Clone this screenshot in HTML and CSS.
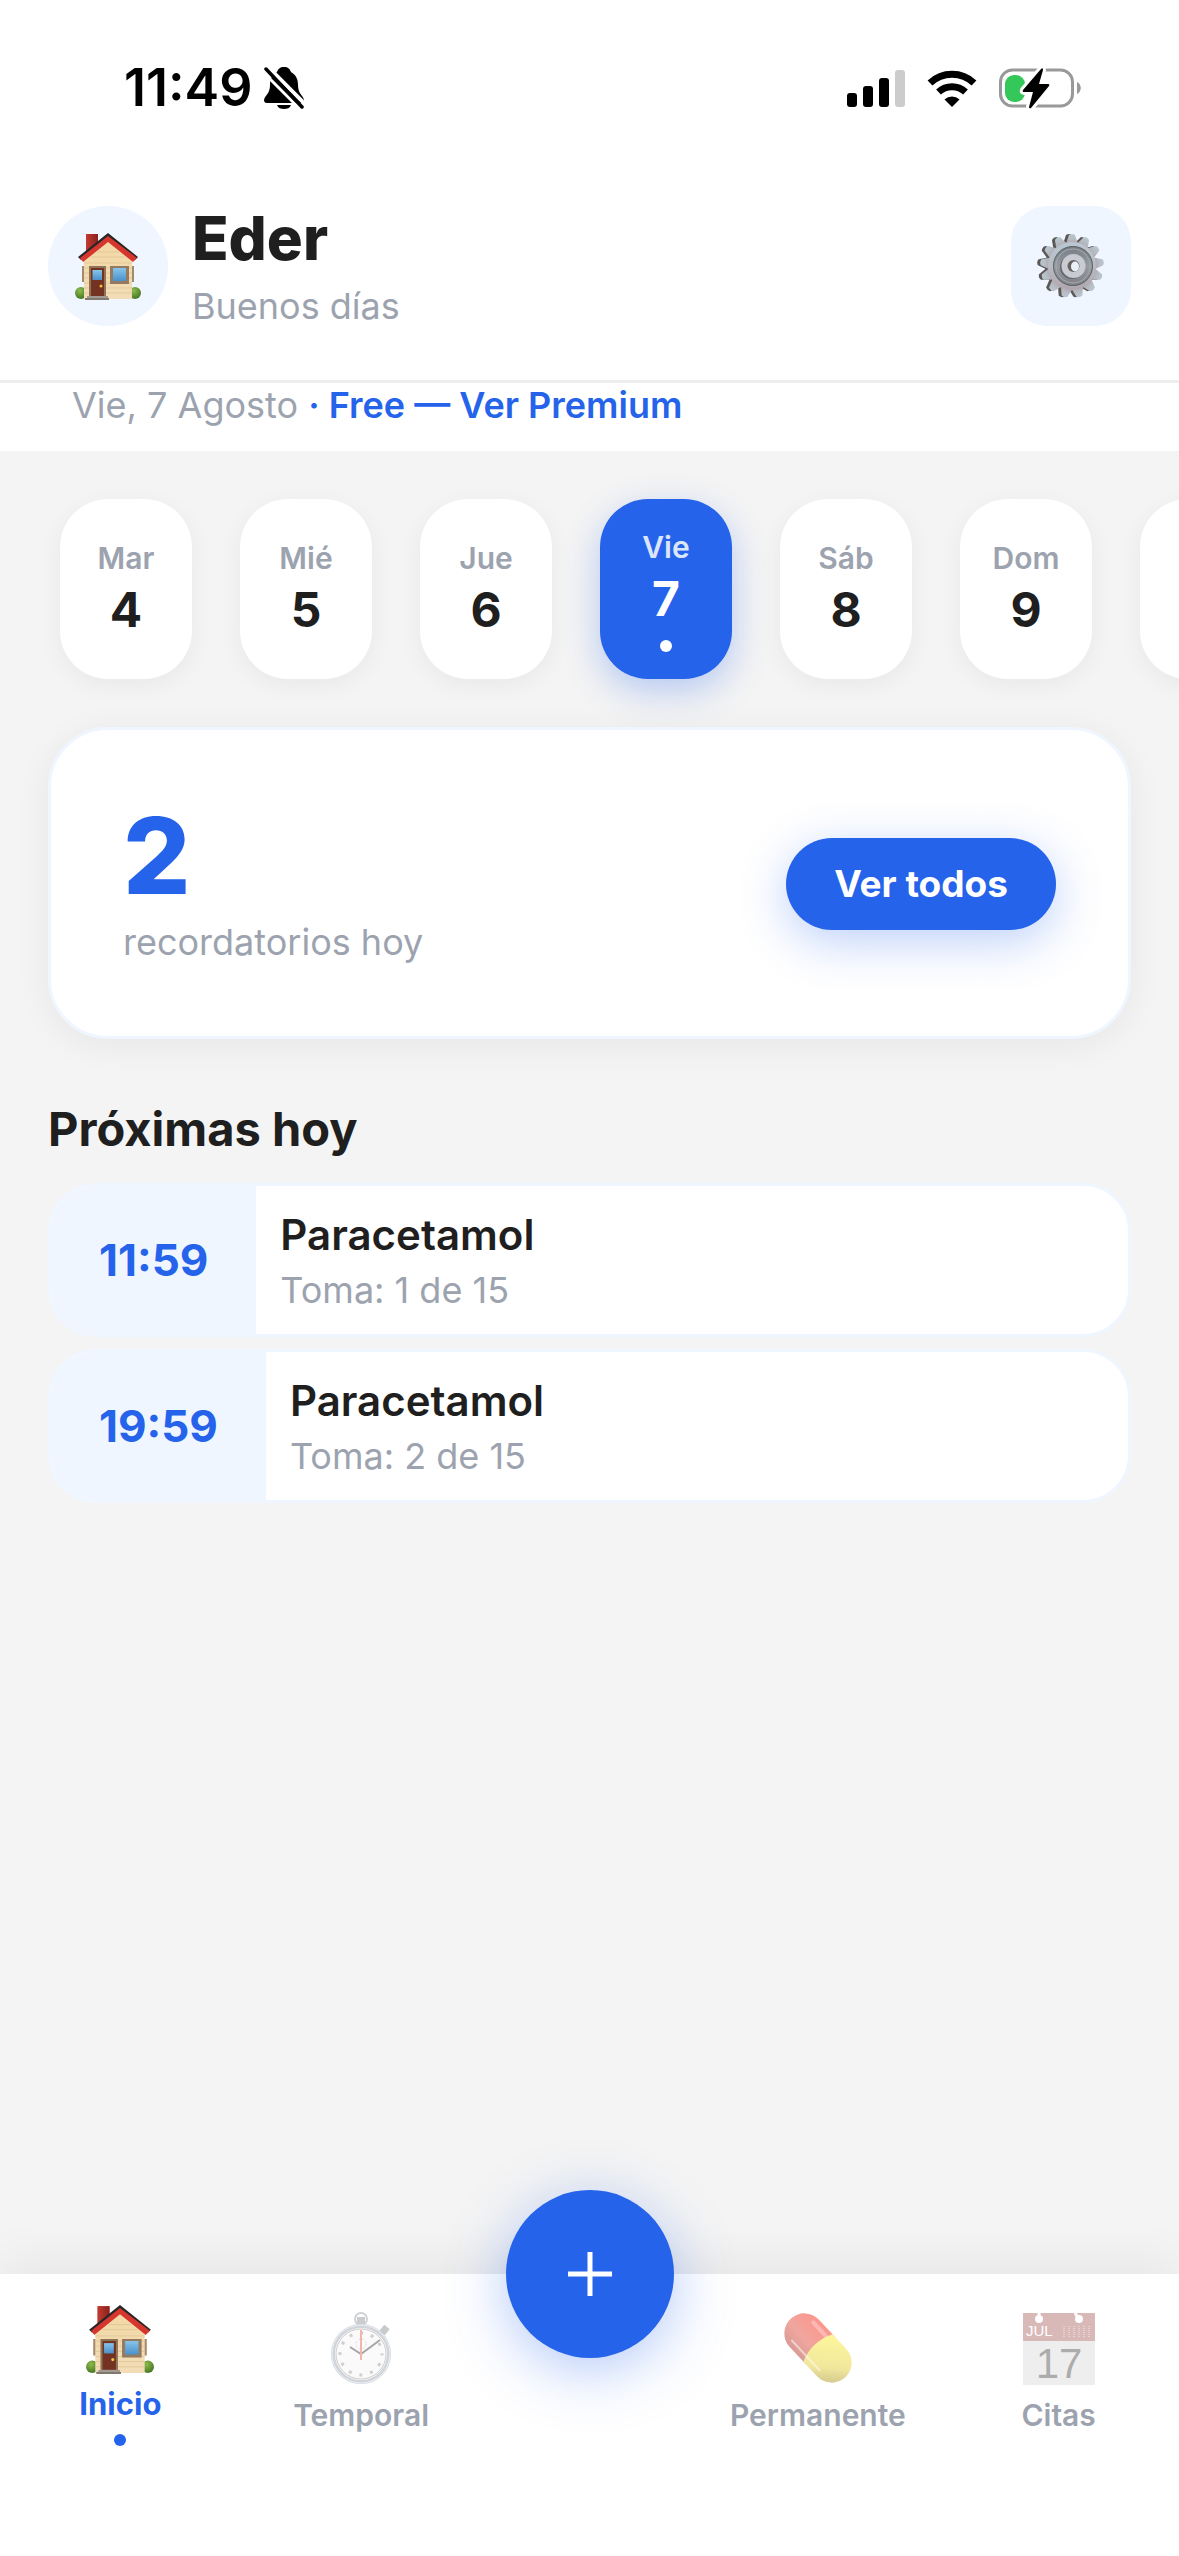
FILE: index.html
```html
<!DOCTYPE html>
<html lang="es">
<head>
    <meta charset="UTF-8">
    <meta name="viewport" content="width=device-width, initial-scale=1.0">
    <title>Recordatorios</title>
    <link rel="stylesheet" href="styles.css">
</head>
<body>
    <!-- Shared drawings -->
    <svg class="defs" aria-hidden="true">
        <defs>
            <linearGradient id="wall" x1="0" y1="0" x2="0" y2="1">
                <stop offset="0" stop-color="#f3d8a4"/>
                <stop offset="1" stop-color="#f2ddb8"/>
            </linearGradient>
            <linearGradient id="glass" x1="0" y1="0" x2="0" y2="1">
                <stop offset="0" stop-color="#86c5ea"/>
                <stop offset="1" stop-color="#4a90cb"/>
            </linearGradient>
            <linearGradient id="brick" x1="0" y1="0" x2="1" y2="0">
                <stop offset="0" stop-color="#c23c32"/>
                <stop offset="1" stop-color="#8a201c"/>
            </linearGradient>
            <radialGradient id="bush" cx=".4" cy=".3" r=".8">
                <stop offset="0" stop-color="#8dbb4c"/>
                <stop offset="1" stop-color="#3c6f1f"/>
            </radialGradient>
            <linearGradient id="steel" x1="0" y1="0" x2="0" y2="1">
                <stop offset="0" stop-color="#b9c8d1"/>
                <stop offset=".5" stop-color="#b7bcc4"/>
                <stop offset="1" stop-color="#b0a6ad"/>
            </linearGradient>
            <linearGradient id="dish" x1="0" y1="0" x2="0" y2="1">
                <stop offset="0" stop-color="#747b82"/>
                <stop offset=".5" stop-color="#959ba1"/>
                <stop offset="1" stop-color="#7f7e84"/>
            </linearGradient>
        </defs>
        <symbol id="house" viewBox="0 0 66 68">
            <path d="M11 2h12v22H11z" fill="url(#brick)"/>
            <path d="M7 34h3v16H7zM56 34h3v16h-3z" fill="#a48a6c"/>
            <circle cx="6" cy="61" r="6" fill="url(#bush)"/>
            <circle cx="60" cy="61" r="6" fill="url(#bush)"/>
            <path d="M9 26 33 5l24 21v41H9z" fill="url(#wall)"/>
            <path d="M9 31h48M9 36h48M9 41h48M9 46h48M9 51h48M9 56h48M9 61h48M16 25h34M22 20h22" stroke="#dcc191" stroke-width=".7"/>
            <path d="M33 1 3 25l3 3L33 6l27 22 3-3z" fill="#282526"/>
            <path d="M33 4 5 26l3 4L33 10l25 20 4-4z" fill="#d5362e"/>
            <path d="M14 34h17v30H14z" fill="#8f7357"/>
            <path d="M16 36h13v28H16z" fill="#733222"/>
            <path d="M17.500 38h9.500v10h-9.500z" fill="url(#glass)"/>
            <circle cx="26" cy="54" r="1.500" fill="#f3c23c"/>
            <path d="M35 34h19v18H35z" fill="#937a60"/>
            <path d="M38 36h13v13H38z" fill="url(#glass)"/>
            <path d="M12 64h21v2H12z" fill="#a29a92"/>
            <path d="M10 66h24v2H10z" fill="#81786f"/>
        </symbol>
        <symbol id="cog" viewBox="-33 -33 66 66">
            <g id="cog-teeth">
                <path id="tooth" d="M-6-22l3-9q3-2 6 0l3 9z"/>
                <use href="#tooth" transform="rotate(27.700)"/>
                <use href="#tooth" transform="rotate(55.400)"/>
                <use href="#tooth" transform="rotate(83.100)"/>
                <use href="#tooth" transform="rotate(110.800)"/>
                <use href="#tooth" transform="rotate(138.500)"/>
                <use href="#tooth" transform="rotate(166.200)"/>
                <use href="#tooth" transform="rotate(193.800)"/>
                <use href="#tooth" transform="rotate(221.500)"/>
                <use href="#tooth" transform="rotate(249.200)"/>
                <use href="#tooth" transform="rotate(276.900)"/>
                <use href="#tooth" transform="rotate(304.600)"/>
                <use href="#tooth" transform="rotate(332.300)"/>
                <circle r="24"/>
            </g>
        </symbol>
    </svg>

    <div class="app">
        <div class="status-bar">
            <div class="status-left">
                <span class="clock">11:49</span>
                <svg class="bell" viewBox="0 0 40 44" aria-hidden="true">
                    <path d="M20 1c-4 0-6 2-7 5-5 3-7 7-7 13 0 9-5 10-6 15 0 2 1 3 3 3h34c2 0 3-1 3-3-1-5-6-6-6-15 0-6-2-10-7-13-1-3-3-5-7-5zM13 39h14c-1 3-4 4-7 4s-6-1-7-4z" fill="#000"/>
                    <path d="M2-1 43 40" stroke="#fff" stroke-width="4"/>
                    <path d="M-1 6 36 43" stroke="#fff" stroke-width="3"/>
                    <path d="m2 3 36 38" stroke="#000" stroke-width="3.500" stroke-linecap="round"/>
                </svg>
            </div>
            <div class="status-right">
                <svg class="signal" viewBox="0 0 58 37" aria-hidden="true">
                    <rect y="23" width="10" height="14" rx="3"/>
                    <rect x="16" y="16" width="10" height="21" rx="3"/>
                    <rect x="32" y="8" width="10" height="29" rx="3"/>
                    <rect x="48" width="10" height="37" rx="3" fill="#ccc"/>
                </svg>
                <svg class="wifi" viewBox="0 0 50 37" aria-hidden="true">
                    <path d="M3 13a32 32 0 0 1 44 0M11.500 22a20 20 0 0 1 27 0" fill="none" stroke="#000" stroke-width="7"/>
                    <path d="M25 37l-7.500-7.500a11 11 0 0 1 15 0z"/>
                </svg>
                <svg class="battery" viewBox="0 0 82 40" aria-hidden="true">
                    <rect x="1.500" y="2" width="72" height="36" rx="12" fill="none" stroke="#999" stroke-width="3"/>
                    <path d="M78 14c5 2 5 10 0 12z" fill="#999"/>
                    <rect x="6" y="7" width="20" height="27" rx="9" fill="#34c759"/>
                    <path d="M42 1 24 22q-1 2 1 2h9l-4 15q0 2 2 1l18-22q1-2-1-2h-9l4-14q0-3-2-1z" stroke="#fff" stroke-width="6" paint-order="stroke"/>
                </svg>
            </div>
        </div>

        <header class="header">
            <div class="avatar"><svg class="avatar-icon"><use href="#house"/></svg></div>
            <div class="greeting">
                <h1>Eder</h1>
                <p>Buenos días</p>
            </div>
            <button class="settings" type="button" aria-label="Ajustes">
                <svg viewBox="0 0 66 66" aria-hidden="true">
                    <use href="#cog" x="-2" width="66" height="66" fill="#5d5856"/>
                    <use href="#cog" x="1" width="66" height="66" fill="url(#steel)"/>
                    <circle cx="35" cy="33" r="20" fill="url(#dish)"/>
                    <circle cx="35" cy="33" r="17" fill="none" stroke="#a6acb2" stroke-width="1"/>
                    <circle cx="35" cy="33" r="19.500" fill="none" stroke="#60666c" stroke-width="1"/>
                    <circle cx="34" cy="34" r="12" fill="#65666c"/>
                    <circle cx="35.500" cy="33" r="12" fill="#c8cbd2"/>
                    <circle cx="35.500" cy="33" r="6" fill="#69625e"/>
                    <ellipse cx="37" cy="33.500" rx="4" ry="5" fill="#e8f0fa"/>
                </svg>
            </button>
        </header>

        <div class="date-line">Vie, 7 Agosto <a href="#premium">· Free — Ver Premium</a></div>

        <main class="main">
            <div class="days">
                <button class="day" type="button"><span class="day-name">Mar</span><span class="day-number">4</span></button>
                <button class="day" type="button"><span class="day-name">Mié</span><span class="day-number">5</span></button>
                <button class="day" type="button"><span class="day-name">Jue</span><span class="day-number">6</span></button>
                <button class="day active" type="button"><span class="day-name">Vie</span><span class="day-number">7</span></button>
                <button class="day" type="button"><span class="day-name">Sáb</span><span class="day-number">8</span></button>
                <button class="day" type="button"><span class="day-name">Dom</span><span class="day-number">9</span></button>
                <button class="day" type="button" aria-label="Lunes 10"></button>
            </div>

            <section class="summary">
                <div>
                    <div class="summary-count">2</div>
                    <div class="summary-label">recordatorios hoy</div>
                </div>
                <button class="see-all" type="button">Ver todos</button>
            </section>

            <h2>Próximas hoy</h2>
            <div class="reminders">
                <div class="reminder">
                    <div class="reminder-time">11:59</div>
                    <div class="reminder-info">
                        <h3>Paracetamol</h3>
                        <p>Toma: 1 de 15</p>
                    </div>
                </div>
                <div class="reminder">
                    <div class="reminder-time">19:59</div>
                    <div class="reminder-info">
                        <h3>Paracetamol</h3>
                        <p>Toma: 2 de 15</p>
                    </div>
                </div>
            </div>
        </main>

        <nav class="tab-bar">
            <a class="tab active" href="#inicio">
                <svg class="tab-icon"><use href="#house"/></svg>
                <span>Inicio</span>
            </a>
            <a class="tab" href="#temporal">
                <svg class="tab-icon" viewBox="0 0 72 72" aria-hidden="true">
                    <circle cx="36" cy="6" r="6" fill="none" stroke="#8d9096" stroke-width="2"/>
                    <path d="M32 4h8v7h-8z" fill="#7d8188"/>
                    <path d="m57 20 5-6" stroke="#777e86" stroke-width="7"/>
                    <circle cx="36" cy="41" r="28" fill="#f4f4f4" stroke="#8f98a3" stroke-width="4"/>
                    <circle cx="36" cy="41" r="29" fill="none" stroke="#c8dcf0" stroke-width="1"/>
                    <circle cx="36" cy="41" r="25" fill="none" stroke="#8a8080" stroke-width="1"/>
                    <circle cx="36" cy="41" r="21" fill="none" stroke="#888" stroke-width="3" stroke-dasharray="3 7.996" stroke-dashoffset="1.500"/>
                    <circle cx="36" cy="31" r="5" fill="none" stroke="#aaa" stroke-dasharray="2 2"/>
                    <path d="m25 34 11 7 19-14" fill="none" stroke="#222" stroke-width="2"/>
                    <path d="M36 17v30" stroke="#e8472c" stroke-width="2"/>
                </svg>
                <span>Temporal</span>
            </a>
            <div class="fab-slot">
                <button class="fab" type="button" aria-label="Añadir">
                    <svg viewBox="0 0 44 44" aria-hidden="true"><path d="M22 0v44M0 22h44" stroke="#fff" stroke-width="5"/></svg>
                </button>
            </div>
            <a class="tab" href="#permanente">
                <svg class="tab-icon pill" viewBox="0 0 72 72" aria-hidden="true">
                    <defs>
                        <linearGradient id="pill-red" x1="0" y1="1" x2="0" y2="0">
                            <stop offset="0" stop-color="#b5392f"/>
                            <stop offset=".4" stop-color="#e2503f"/>
                            <stop offset="1" stop-color="#fb3020"/>
                        </linearGradient>
                        <linearGradient id="pill-yellow" x1="1" y1="1" x2="0" y2="0">
                            <stop offset="0" stop-color="#8f7a10"/>
                            <stop offset=".4" stop-color="#e6d23c"/>
                            <stop offset="1" stop-color="#fff23c"/>
                        </linearGradient>
                    </defs>
                    <g transform="rotate(47 36 35)">
                        <path d="M40 15H16a20 20 0 0 0 0 40h24z" fill="url(#pill-red)"/>
                        <path d="M36 15h20a20 20 0 0 1 0 40H36c-6-12-6-28 0-40z" fill="url(#pill-yellow)"/>
                        <path d="M12 49h42" stroke="#fff" stroke-width="2" opacity=".5"/>
                        <path d="M14 21h18" stroke="#fff" stroke-width="4" stroke-linecap="round" opacity=".3"/>
                    </g>
                </svg>
                <span>Permanente</span>
            </a>
            <a class="tab" href="#citas">
                <svg class="tab-icon" viewBox="0 0 72 72" aria-hidden="true">
                    <path d="M0 0h72v72H0z" fill="#d6d6d6"/>
                    <path d="M0 0h72v28H0z" fill="#a3504f"/>
                    <path d="M16 0v6M52 0l4 6" stroke="#fff" stroke-width="3"/>
                    <circle cx="16" cy="6" r="4" fill="#fff"/>
                    <circle cx="56" cy="6" r="4" fill="#fff"/>
                    <path d="M41 13v11M46 13v11M51 13v11M56 13v11M61 13v11M66 13v11" stroke="#e8cfce" stroke-dasharray="1 1"/>
                    <text class="cal-month" x="3" y="23">JUL</text>
                    <text class="cal-day" x="36" y="65">17</text>
                </svg>
                <span>Citas</span>
            </a>
        </nav>
    </div>
</body>
</html>
```
FILE: styles.css
```css
* {
    box-sizing: border-box;
}

body {
    margin: 0;
    background: #f4f4f4;
    color: #1f1f1f;
    font-family: Inter, "Liberation Sans", sans-serif;
}

h1, h2, h3, p {
    margin: 0;
}

button {
    border: 0;
    padding: 0;
    font: inherit;
    color: inherit;
    cursor: pointer;
}

a {
    color: #2563eb;
    text-decoration: none;
}

svg {
    display: block;
    overflow: visible;
}

.defs {
    position: absolute;
    width: 0;
    height: 0;
}

.app {
    display: flex;
    flex-direction: column;
    min-height: 100vh;
    overflow: hidden;
}

/* Status bar */
.status-bar {
    display: flex;
    justify-content: space-between;
    align-items: center;
    height: 176px;
    padding: 0 98px 0 124px;
    background: #fff;
    color: #000;
}

.status-left, .status-right {
    display: flex;
    align-items: center;
}

.status-left {
    gap: 12px;
}

.status-right {
    gap: 22px;
}

.clock {
    font-size: 52px;
    line-height: 60px;
    font-weight: 600;
}

.bell { width: 40px; height: 44px; overflow: hidden; }
.signal { width: 58px; height: 37px; }
.wifi { width: 50px; height: 37px; }
.battery { width: 82px; height: 40px; }

/* Header */
.header {
    display: flex;
    align-items: center;
    gap: 24px;
    padding: 30px 48px 54px;
    border-bottom: 3px solid #eee;
    background: #fff;
}

.avatar, .settings {
    display: flex;
    justify-content: center;
    align-items: center;
    width: 120px;
    height: 120px;
    background: #eff6ff;
}

.avatar {
    border-radius: 50%;
}

.settings {
    border-radius: 36px;
}

.settings svg { width: 66px; height: 66px; }
.avatar-icon { width: 66px; height: 68px; }

/* the text block is taller than the avatar, keep the row at 120px */
.greeting {
    flex: 1;
    margin: -4px 0;
}

.greeting h1 {
    margin-bottom: 8px;
    font-size: 60px;
    line-height: 72px;
    font-weight: 800;
}

.greeting p, .date-line, .summary-label, .reminder-info p {
    font-size: 36px;
    line-height: 48px;
    color: #9ca3af;
}

.date-line {
    padding: 0 72px 24px;
    background: #fff;
    line-height: 44px;
}

.date-line a {
    font-weight: 600;
}

.main {
    flex: 1;
}

/* Day strip */
.days {
    display: flex;
    gap: 48px;
    padding: 48px 60px;
}

.day {
    display: flex;
    flex: none;
    flex-direction: column;
    justify-content: center;
    align-items: center;
    width: 132px;
    height: 180px;
    border-radius: 48px;
    background: #fff;
    box-shadow: 0 6px 24px rgba(0, 0, 0, 0.05);
}

.day-name {
    font-size: 30px;
    line-height: 42px;
    font-weight: 600;
    color: #9ca3af;
}

.day-number {
    font-size: 48px;
    line-height: 62px;
    font-weight: 700;
}

.day.active {
    background: #2563eb;
    color: #fff;
    box-shadow: 0 12px 36px rgba(37, 99, 235, 0.3);
}

.day.active .day-name {
    color: #dbe6fd;
}

.day.active::after {
    content: "";
    width: 12px;
    height: 12px;
    margin-top: 10px;
    border-radius: 50%;
    background: #fff;
}

/* Summary card */
.summary {
    display: flex;
    justify-content: space-between;
    align-items: center;
    margin: 0 48px;
    padding: 72px 72px 70px;
    border: 3px solid #eff6ff;
    border-radius: 60px;
    background: #fff;
    box-shadow: 0 6px 36px rgba(0, 0, 0, 0.06);
}

.summary-count {
    margin-bottom: 8px;
    font-size: 106px;
    line-height: 108px;
    font-weight: 800;
    color: #2563eb;
}

.see-all {
    padding: 22px 48px;
    border-radius: 46px;
    background: #2563eb;
    color: #fff;
    font-size: 37px;
    line-height: 48px;
    font-weight: 700;
    box-shadow: 0 12px 48px rgba(37, 99, 235, 0.3);
}

/* Upcoming */
h2 {
    margin: 60px 48px 24px;
    font-size: 47px;
    line-height: 60px;
    font-weight: 700;
}

.reminders {
    display: flex;
    flex-direction: column;
    gap: 12px;
    padding: 0 48px;
}

.reminder {
    display: flex;
    overflow: hidden;
    border: 3px solid #eff6ff;
    border-radius: 48px;
    background: #fff;
}

.reminder-time {
    display: flex;
    align-items: center;
    padding: 0 48px;
    background: #eff6ff;
    color: #2563eb;
    font-size: 44px;
    font-weight: 700;
}

.reminder-info {
    padding: 22px 24px;
}

.reminder-info h3 {
    margin-bottom: 6px;
    font-size: 42px;
    line-height: 54px;
    font-weight: 600;
}

.reminder-info p {
    line-height: 44px;
}

/* Bottom tabs */
.tab-bar {
    display: grid;
    grid-template-columns: 1fr 1fr 216px 1fr 1fr;
    height: 282px;
    background: #fff;
    box-shadow: 0 -12px 48px rgba(0, 0, 0, 0.06);
}

.tab {
    display: flex;
    flex-direction: column;
    align-items: center;
    gap: 12px;
    padding-top: 39px;
    color: #9ca3af;
    font-size: 30px;
    line-height: 36px;
    font-weight: 600;
}

.tab-icon {
    width: 72px;
    height: 72px;
    opacity: 0.4;
}

.tab-icon.pill {
    opacity: 0.5;
}

.tab.active {
    padding-top: 30px;
    color: #2563eb;
    font-size: 31px;
    font-weight: 700;
}

.tab.active .tab-icon {
    width: 68px;
    height: 70px;
    opacity: 1;
}

.tab.active::after {
    content: "";
    width: 12px;
    height: 12px;
    border-radius: 50%;
    background: #2563eb;
}

.fab-slot {
    display: flex;
    justify-content: center;
}

.fab {
    display: flex;
    justify-content: center;
    align-items: center;
    width: 168px;
    height: 168px;
    margin-top: -84px;
    border-radius: 50%;
    background: #2563eb;
    box-shadow: 0 12px 60px rgba(37, 99, 235, 0.35);
}

.fab svg {
    width: 44px;
    height: 44px;
}

.cal-month, .cal-day {
    font-family: "Liberation Sans", sans-serif;
    font-weight: 400;
}

.cal-month {
    font-size: 15px;
    fill: #fff;
}

.cal-day {
    font-size: 42px;
    fill: #333;
    text-anchor: middle;
}
```
